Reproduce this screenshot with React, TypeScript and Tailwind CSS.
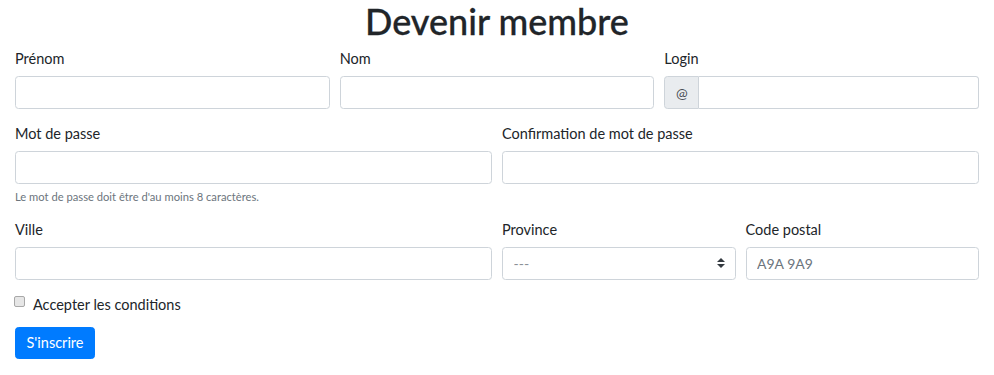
import React, { useState } from 'react';

const font = { fontFamily: 'Lato, "Open Sans", sans-serif' };

const inputCls =
  'block w-full h-[33px] px-[10.5px] text-[14px] text-[#495057] bg-white border border-[#ced4da] rounded-[3.5px] outline-none placeholder:text-[#6c757d]';

const Label: React.FC<{ htmlFor: string; children: React.ReactNode }> = ({ htmlFor, children }) => (
  <label htmlFor={htmlFor} className="block mb-[7px] leading-[21px] text-[14.5px] text-[#212529]">
    {children}
  </label>
);

const App: React.FC = () => {
  const [accept, setAccept] = useState(false);

  return (
    <div style={font} className="min-h-screen bg-white px-[15px] text-[14px] text-[#212529]">
      <h1 className="text-center text-[36px] font-medium leading-[42px] mb-[6px] [-webkit-text-stroke:0.3px_#212529]">
        Devenir membre
      </h1>

      <form onSubmit={e => e.preventDefault()}>
        <div className="grid grid-cols-3 gap-x-[10px] mb-[14px]">
          <div>
            <Label htmlFor="prenom">Prénom</Label>
            <input id="prenom" className={inputCls} />
          </div>
          <div>
            <Label htmlFor="nom">Nom</Label>
            <input id="nom" className={inputCls} />
          </div>
          <div>
            <Label htmlFor="login">Login</Label>
            <div className="flex">
              <span className="flex items-center justify-center w-[35px] h-[33px] bg-[#e9ecef] border border-[#ced4da] rounded-l-[3.5px] text-[#495057] text-[14px]">
                @
              </span>
              <input
                id="login"
                className="block flex-1 min-w-0 h-[33px] px-[10.5px] text-[14px] bg-white border border-l-0 border-[#ced4da] rounded-r-[3.5px] outline-none"
              />
            </div>
          </div>
        </div>

        <div className="grid grid-cols-2 gap-x-[10px] mb-[14px]">
          <div>
            <Label htmlFor="pwd">Mot de passe</Label>
            <input id="pwd" type="password" className={inputCls} />
            <small className="block mt-[3.5px] text-[11.2px] leading-[17px] text-[#6c757d]">
              Le mot de passe doit être d'au moins 8 caractères.
            </small>
          </div>
          <div>
            <Label htmlFor="pwd2">Confirmation de mot de passe</Label>
            <input id="pwd2" type="password" className={inputCls} />
          </div>
        </div>

        <div className="grid grid-cols-4 gap-x-[10px] mb-[14px]">
          <div className="col-span-2">
            <Label htmlFor="ville">Ville</Label>
            <input id="ville" className={inputCls} />
          </div>
          <div>
            <Label htmlFor="province">Province</Label>
            <div className="relative">
              <select
                id="province"
                defaultValue=""
                className="block w-full h-[33px] pl-[10.5px] pr-[28px] appearance-none text-[14px] text-[#8a9096] bg-white border border-[#ced4da] rounded-[3.5px] outline-none"
              >
                <option value="">---</option>
                <option>Québec</option>
                <option>Ontario</option>
              </select>
              <svg
                className="absolute right-[10.5px] top-1/2 -translate-y-1/2 pointer-events-none"
                width="8"
                height="10"
                viewBox="0 0 4 5"
              >
                <path fill="#343a40" d="M2 0L0 2h4zm0 5L0 3h4z" />
              </svg>
            </div>
          </div>
          <div>
            <Label htmlFor="cp">Code postal</Label>
            <input id="cp" placeholder="A9A 9A9" className={inputCls} />
          </div>
        </div>

        <div className="flex items-start mb-[12px] leading-[21px]">
          <input
            id="accept"
            type="checkbox"
            checked={accept}
            onChange={e => setAccept(e.target.checked)}
            className="mt-[2px] ml-[-1px] mr-[8px] w-[11px] h-[11px] appearance-none bg-[#e6e6e6] border border-[#a8a8a8] rounded-[2px] checked:bg-[#007bff] checked:border-[#007bff]"
          />
          <label htmlFor="accept" className="text-[14.5px]">
            Accepter les conditions
          </label>
        </div>

        <button
          type="submit"
          className="h-[32px] px-[10.5px] text-[14.5px] leading-[21px] text-white bg-[#007bff] border border-[#007bff] rounded-[3.5px]"
        >
          S'inscrire
        </button>
      </form>
    </div>
  );
};

export default App;
